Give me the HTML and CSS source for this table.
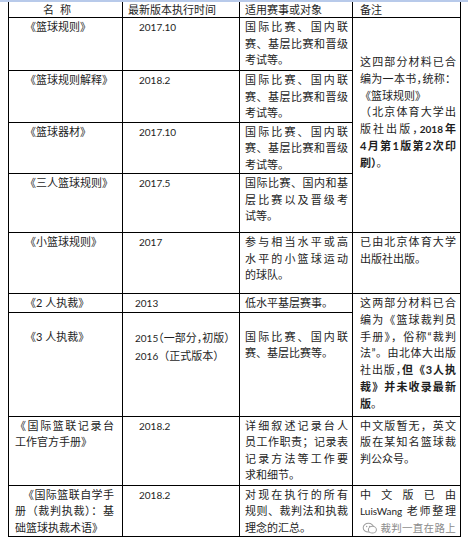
FILE: index.html
```html
<!DOCTYPE html>
<html lang="zh-CN">
<head>
<meta charset="utf-8">
<title>篮球规则版本</title>
<link rel="stylesheet" href="styles.css">
</head>
<body>
<div class="topbar"></div>
<div class="sheet">
<table class="specs">
<colgroup><col class="w1"><col class="w2"><col class="w3"><col class="w4"></colgroup>
<tr class="head">
<td class="name hname">名称</td>
<td class="ver hver">最新版本执行时间</td>
<td class="scope">适用赛事或对象</td>
<td class="note">备注</td>
</tr>
<tr class="r1">
<td class="name ind">《篮球规则》</td>
<td class="ver"><span class="num">2017.10</span></td>
<td class="scope"><span class="jl">国际比赛、国内联</span><span class="jl">赛、基层比赛和晋级</span>考试等。</td>
<td class="note first" rowspan="4"><span class="jl">这四部分材料已合</span><span class="jl">编为一本书<span class="half">，</span>统称：</span>《篮球规则》<span class="jl">（北京体育大学出</span><span class="jl">版社出版<span class="half">，</span><b><span class="num">2018</span>年</b></span><b class="jl">4月第1版第2次印</b><b>刷）</b>。</td>
</tr>
<tr class="r2">
<td class="name ind">《篮球规则解释》</td>
<td class="ver"><span class="num">2018.2</span></td>
<td class="scope"><span class="jl">国际比赛、国内联</span><span class="jl">赛、基层比赛和晋级</span>考试等。</td>
</tr>
<tr class="r3">
<td class="name ind">《篮球器材》</td>
<td class="ver"><span class="num">2017.10</span></td>
<td class="scope"><span class="jl">国际比赛、国内联</span><span class="jl">赛、基层比赛和晋级</span>考试等。</td>
</tr>
<tr class="r4">
<td class="name ind">《三人篮球规则》</td>
<td class="ver"><span class="num">2017.5</span></td>
<td class="scope"><span class="jl">国际比赛、国内和基</span><span class="jl">层比赛以及晋级考</span>试等。</td>
</tr>
<tr class="r5">
<td class="name ind">《小篮球规则》</td>
<td class="ver"><span class="num">2017</span></td>
<td class="scope"><span class="jl">参与相当水平或高</span><span class="jl">水平的小篮球运动</span>的球队。</td>
<td class="note"><span class="jl">已由北京体育大学</span>出版社出版。</td>
</tr>
<tr class="r6">
<td class="name ind">《2 人执裁》</td>
<td class="ver tight"><span class="num">2013</span></td>
<td class="scope">低水平基层赛事。</td>
<td class="note" rowspan="2"><span class="jl">这两部分材料已合</span><span class="jl">编为《篮球裁判员</span><span class="jl">手册<span class="half">》</span>，俗称“裁判</span><span class="jl">法”。由北体大出版</span><span class="jl">社出版<span class="half">，</span><b>但《3人执</b></span><b class="jl">裁》并未收录最新</b><b>版</b>。</td>
</tr>
<tr class="r7">
<td class="name ind low">《3 人执裁》</td>
<td class="ver tight low"><span class="line"><span class="num">2015</span><span class="half">（</span>一部分<span class="half">，</span>初版）</span><span class="line"><span class="num">2016</span>（正式版本）</span></td>
<td class="scope low"><span class="jl">国际比赛、国内联</span>赛、基层比赛等。</td>
</tr>
<tr class="r8">
<td class="name"><span class="jl">《国际篮联记录台</span>工作官方手册》</td>
<td class="ver"><span class="num">2018.2</span></td>
<td class="scope"><span class="jl">详细叙述记录台人</span><span class="jl">员工作职责；记录表</span><span class="jl">记录方法等工作要</span>求和细节。</td>
<td class="note"><span class="jl">中文版暂无，英文</span><span class="jl">版在某知名篮球裁</span>判公众号。</td>
</tr>
<tr class="r9">
<td class="name"><span class="jl ind9">《国际篮联自学手</span><span class="jl">册（裁判执裁）：基</span>础篮球执裁术语》</td>
<td class="ver"><span class="num">2018.2</span></td>
<td class="scope"><span class="jl">对现在执行的所有</span><span class="jl">规则、裁判法和执裁</span>理念的汇总。</td>
<td class="note"><span class="jl">中文版已由</span><span class="jl"><span class="num">LuisWang</span> 老师整理</span><span class="watermark"><svg class="wm-icon" viewBox="0 0 20 16" width="16" height="13" aria-hidden="true"><ellipse cx="8" cy="7" rx="6.5" ry="5.5" fill="none" stroke="#a0a0a0" stroke-width="1.3"/><ellipse cx="13" cy="9.5" rx="5" ry="4.2" fill="#fff" stroke="#a0a0a0" stroke-width="1.3"/><circle cx="5.8" cy="5.6" r="0.9" fill="#a0a0a0"/><circle cx="9.6" cy="5.6" r="0.9" fill="#a0a0a0"/></svg><span class="wm-text">裁判一直在路上</span></span></td>
</tr>
</table>
</div>
<div class="bottombar"></div>
</body>
</html>
```

FILE: styles.css
```css
* { box-sizing: border-box; }
html, body { margin: 0; padding: 0; background: #fff; }
body {
  width: 468px;
  height: 544px;
  overflow: hidden;
  font-family: Lato, "Noto Sans CJK SC", sans-serif;
  font-size: 11px;
  line-height: 16.5px;
  color: #1e1e1e;
}
.topbar { height: 2px; background: #b8caea; }
.sheet { padding-left: 8px; }
.specs {
  border-collapse: collapse;
  table-layout: fixed;
  width: 452px;
}
.w1 { width: 114px; }
.w2 { width: 117px; }
.w3 { width: 113px; }
.w4 { width: 108px; }
.specs td {
  border: 1px solid #000;
  vertical-align: top;
  padding: 1px 0 0 0;
}
.specs .head td { border-top: none; line-height: 15px; padding-top: 0; }
.head { height: 15px; }
.r1 { height: 53px; }
.r2 { height: 51px; }
.r3 { height: 51px; }
.r4 { height: 59px; }
.r5 { height: 61px; }
.r6 { height: 18px; }
.r7 { height: 104px; }
.r8 { height: 69px; }
.r9 { height: 51px; }

.name { padding-left: 6px !important; padding-right: 8px !important; }
.ver { padding-left: 16px !important; }
.ver.tight { padding-left: 12px !important; }
.scope { padding-left: 5px !important; padding-right: 4px !important; }
.note { padding-left: 7px !important; padding-right: 4px !important; line-height: 16.8px; }

.hname { padding-left: 34px !important; letter-spacing: 6px; }
.hver { padding-left: 5px !important; }

.ind { text-indent: 10px; }
.ind9 { text-indent: 8px; }
.low { padding-top: 16px !important; }
.first { padding-top: 36px !important; }

.jl {
  display: block;
  text-align: justify;
  text-align-last: justify;
}
.line { display: block; line-height: 18px; }
.num { font-size: 10px; }
.half { font-feature-settings: "halt" 1; }
b { font-weight: 700; }

.watermark {
  display: flex;
  align-items: center;
  justify-content: flex-end;
  gap: 2px;
  height: 16px;
}
.wm-icon { display: block; }
.wm-text { color: #8c8c8c; font-size: 10.5px; letter-spacing: 0.3px; }

.bottombar {
  margin-top: 7px;
  height: 3px;
  background: #8695a8;
}
```
